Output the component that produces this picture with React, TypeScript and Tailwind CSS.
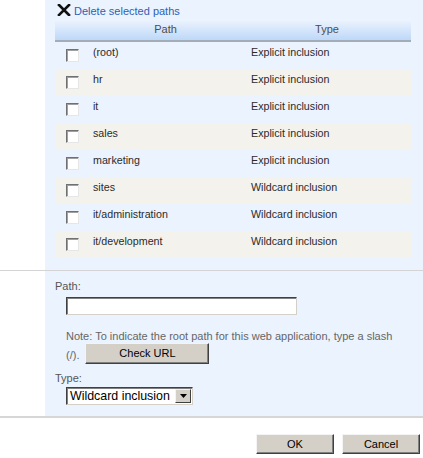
import React from "react";

const rows: [string, string][] = [
  ["(root)", "Explicit inclusion"],
  ["hr", "Explicit inclusion"],
  ["it", "Explicit inclusion"],
  ["sales", "Explicit inclusion"],
  ["marketing", "Explicit inclusion"],
  ["sites", "Wildcard inclusion"],
  ["it/administration", "Wildcard inclusion"],
  ["it/development", "Wildcard inclusion"],
];

function Check() {
  return (
    <span className="block w-[13px] h-[13px] bg-white border-t border-l border-[#707070] border-r-[#e6e6e6] border-b-[#e6e6e6] border-r border-b shadow-[inset_1px_1px_0_#a0a0a0]" />
  );
}

function WinButton({ label, className }: { label: string; className: string }) {
  return (
    <div
      className={`flex items-center justify-center bg-[#d4d0c8] border border-t-[#f4f4f4] border-l-[#f4f4f4] border-r-[#404040] border-b-[#404040] shadow-[inset_-1px_-1px_0_#808080] text-[11px] text-black ${className}`}
    >
      {label}
    </div>
  );
}

export default function App() {
  return (
    <div
      className="w-[423px] h-[458px] bg-white overflow-hidden"
      style={{ fontFamily: '"Liberation Sans", Arial, sans-serif' }}
    >
      <div className="flex h-[270px]">
        <div className="w-[45px] shrink-0" />
        <div className="flex-1 bg-[#ebf3fe] pl-[10px]">
          <div className="flex items-center h-[19px] pt-[1px]">
            <svg width="14" height="12" viewBox="0 0 14 12" className="ml-[2px] mr-[3px]">
              <path d="M2 1 L12 11 M12 1 L2 11" stroke="#111" strokeWidth="2.6" strokeLinecap="square" />
            </svg>
            <span className="text-[11px] text-[#2f5fb3] leading-[13px] mt-[2px]">Delete selected paths</span>
          </div>
          <div className="w-[356px]">
            <div className="flex h-[23px] bg-gradient-to-b from-[#eef5fe] to-[#bed8f8] border-b-2 border-[#a3adb9] text-[11px] text-[#4d4d4d] items-center">
              <div className="w-[33px]" />
              <div className="w-[155px] text-center">Path</div>
              <div className="flex-1 text-center">Type</div>
            </div>
            {rows.map(([p, t], i) => (
              <div
                key={p}
                className={`flex h-[27px] text-[10.7px] leading-[13px] text-[#2b2b2b] ${i % 2 === 1 ? "bg-[#f4f2ed]" : ""}`}
              >
                <div className="w-[38px] pl-[11px] pt-[7px]">
                  <Check />
                </div>
                <div className="w-[158px] pt-[4px]">{p}</div>
                <div className="flex-1 pt-[4px]">{t}</div>
              </div>
            ))}
          </div>
        </div>
      </div>
      <div className="h-px bg-[#d4d4d4]" />
      <div className="flex h-[145px]">
        <div className="w-[45px] shrink-0" />
        <div className="flex-1 bg-[#ebf3fe] pl-[10px] text-[11px] leading-[13px]">
          <div className="mt-[9px] text-[#555]">Path:</div>
          <div className="ml-[11px] mt-[4px] w-[231px] h-[18px] bg-white border border-t-[#404040] border-l-[#404040] border-r-[#d4d0c8] border-b-[#d4d0c8] shadow-[inset_1px_1px_0_#808080]" />
          <div className="ml-[11px] mt-[15px] text-[#666]">
            Note: To indicate the root path for this web application, type a slash
          </div>
          <div className="ml-[11px] flex items-center">
            <span className="text-[#666] mt-[4px]">(/).</span>
            <WinButton label="Check URL" className="ml-[6px] w-[124px] h-[21px]" />
          </div>
          <div className="mt-[8px] text-[#555]">Type:</div>
          <div className="ml-[11px] mt-[2px] w-[127px] h-[18px] bg-white border border-t-[#404040] border-l-[#404040] border-r-[#d4d0c8] border-b-[#d4d0c8] shadow-[inset_1px_1px_0_#808080] flex items-center">
            <span className="flex-1 pl-[3px] text-[12.4px] text-black leading-[15px] whitespace-nowrap overflow-hidden">Wildcard inclusion</span>
            <div className="w-[16px] h-[14px] mr-[1px] shrink-0 bg-[#d4d0c8] border border-t-[#f4f4f4] border-l-[#f4f4f4] border-r-[#404040] border-b-[#404040] flex items-center justify-center">
              <svg width="7" height="4" viewBox="0 0 7 4">
                <path d="M0 0 H7 L3.5 4 Z" fill="#000" />
              </svg>
            </div>
          </div>
        </div>
      </div>
      <div className="h-[2px] bg-[#d6d6d6]" />
      <div className="flex justify-end gap-[8px] pr-[3px] mt-[16px]">
        <WinButton label="OK" className="w-[78px] h-[20px]" />
        <WinButton label="Cancel" className="w-[78px] h-[20px]" />
      </div>
    </div>
  );
}
